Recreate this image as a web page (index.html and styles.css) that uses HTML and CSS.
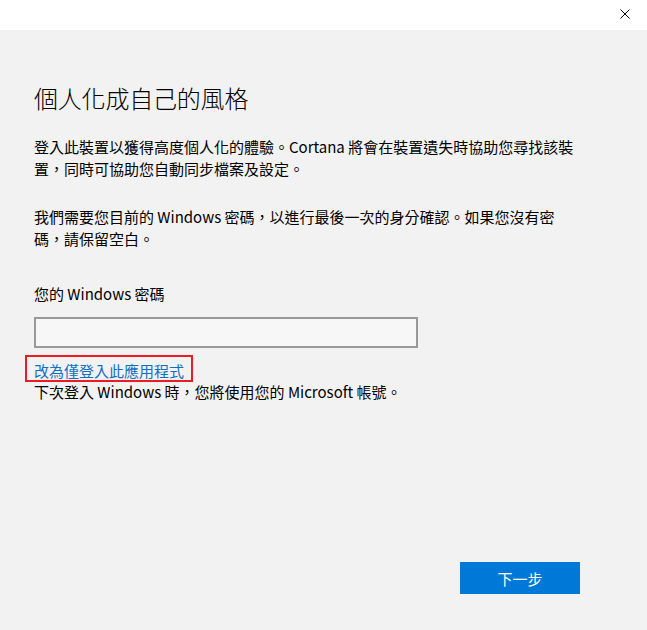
FILE: index.html
```html
<!DOCTYPE html>
<html lang="zh-Hant">
<head>
<meta charset="utf-8">
<title>個人化成自己的風格</title>
<link rel="stylesheet" href="styles.css">
</head>
<body>
<div class="titlebar">
  <button class="close" aria-label="關閉">
    <svg width="10" height="10" viewBox="0 0 10 10"><path d="M0.5 0.5 L9.5 9.5 M9.5 0.5 L0.5 9.5" stroke="#000" stroke-width="1" fill="none"/></svg>
  </button>
</div>
<main class="content">
  <h1 class="title">個人化成自己的風格</h1>
  <p class="para p1">登入此裝置以獲得高度個人化的體驗。Cortana 將會在裝置遺失時協助您尋找該裝<br>置，同時可協助您自動同步檔案及設定。</p>
  <p class="para p2">我們需要您目前的 Windows 密碼，以進行最後一次的身分確認。如果您沒有密<br>碼，請保留空白。</p>
  <label class="label" for="pw">您的 Windows 密碼</label>
  <input class="input" id="pw" type="password">
  <div class="highlight"><a class="link" href="#">改為僅登入此應用程式</a></div>
  <p class="note">下次登入 Windows 時，您將使用您的 Microsoft 帳號。</p>
  <div class="actions">
    <button class="next">下一步</button>
  </div>
</main>
</body>
</html>
```
FILE: styles.css
```css
html, body {
  margin: 0;
  padding: 0;
  height: 100%;
}
body {
  font-family: "Noto Sans CJK TC", "Noto Sans", sans-serif;
  color: #000;
  background: #f2f2f2;
  overflow: hidden;
}
.titlebar {
  height: 30px;
  background: #fff;
  display: flex;
  justify-content: flex-end;
  align-items: flex-start;
}
.close {
  border: 0;
  background: transparent;
  padding: 0;
  margin: 9px 17px 0 0;
  width: 10px;
  height: 10px;
  display: flex;
}
.content {
  height: calc(100vh - 30px);
  box-sizing: border-box;
  padding: 0 67px 36px 34px;
  display: flex;
  flex-direction: column;
  align-items: flex-start;
}
.title {
  margin: 52px 0 0 0;
  font-size: 24px;
  font-weight: 300;
  line-height: 32px;
  letter-spacing: -0.2px;
}
.para {
  margin: 0;
  font-size: 15px;
  line-height: 22px;
  font-weight: 400;
}
.p1 { margin-top: 22px; }
.p2 { margin-top: 26px; }
.label {
  margin-top: 33px;
  font-size: 15px;
  line-height: 22px;
}
.input {
  margin: 12px 0 0 0;
  box-sizing: border-box;
  width: 384px;
  height: 31px;
  border: 2px solid #999;
  background: #f7f7f7;
  outline: none;
  padding: 0 8px;
}
.highlight {
  margin: 7px 0 0 -9px;
  border: 2px solid #ed1c24;
  padding: 4px 7px 0 7px;
  height: 19px;
}
.link {
  display: block;
  color: #0f6fc6;
  text-decoration: none;
  font-size: 15px;
  line-height: 19px;
}
.note {
  margin: 0;
  font-size: 15px;
  line-height: 20px;
}
.actions {
  margin-top: auto;
  align-self: stretch;
  display: flex;
  justify-content: flex-end;
}
.next {
  width: 120px;
  height: 32px;
  border: 0;
  background: #0078d7;
  color: #fff;
  font-family: inherit;
  font-size: 15px;
  padding: 0;
}
```
